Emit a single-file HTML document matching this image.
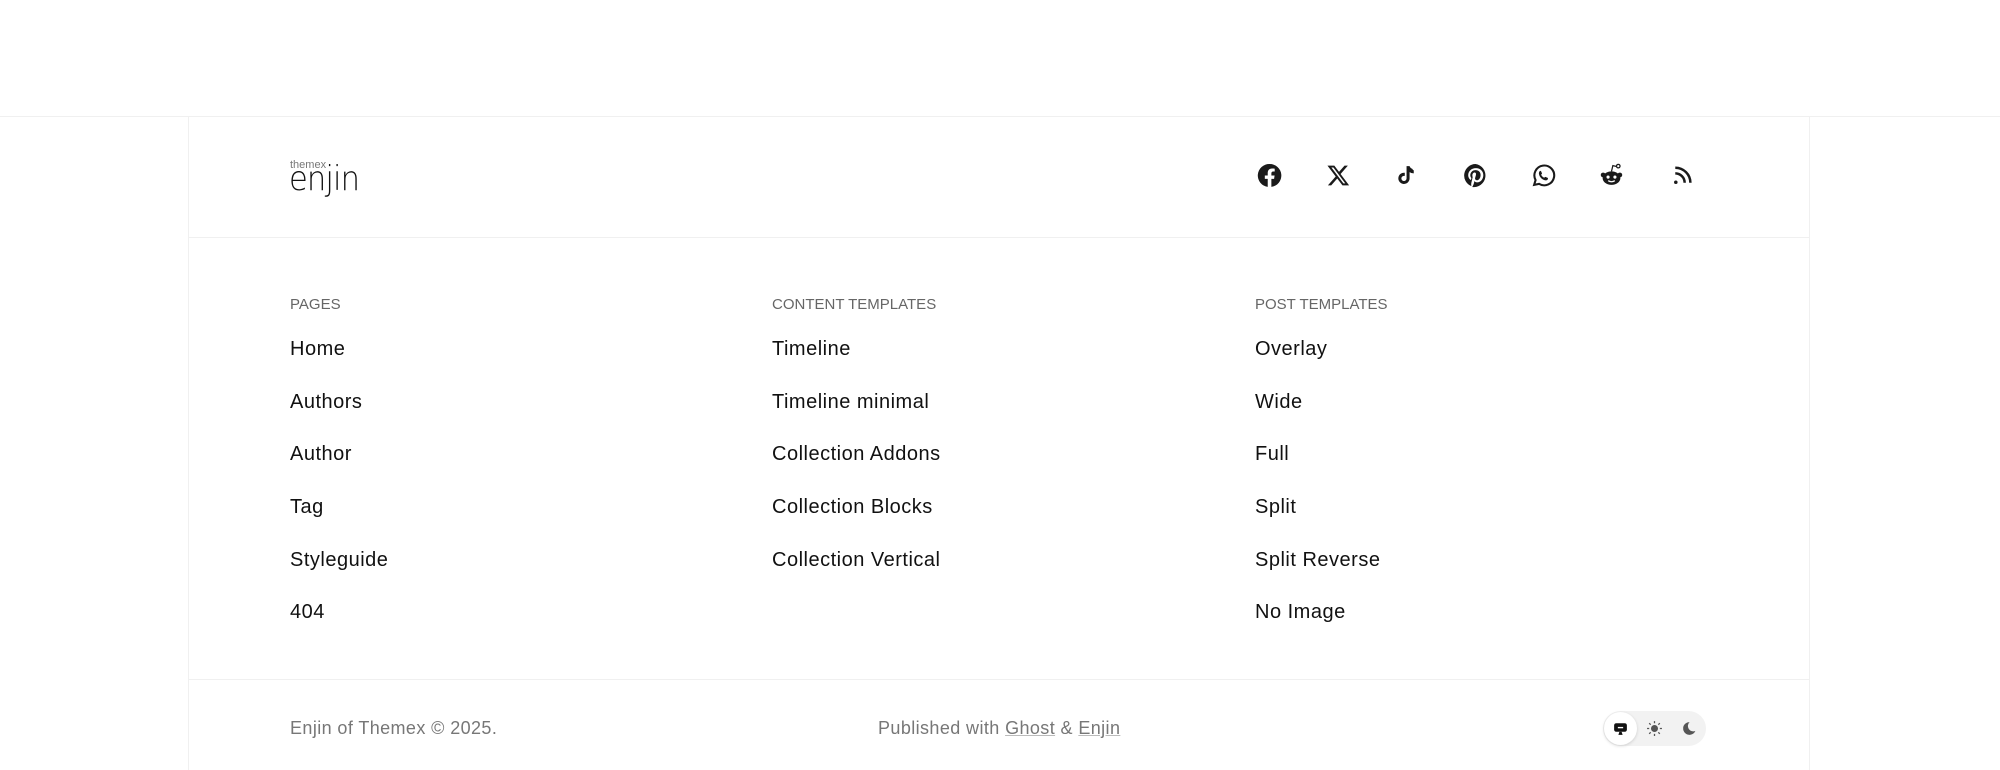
<!DOCTYPE html>
<html><head><meta charset="utf-8"><style>
*{margin:0;padding:0;box-sizing:border-box}
body{width:2000px;height:770px;overflow:hidden;background:#fff;font-family:"Liberation Sans",sans-serif;color:#111;position:relative}
.hl{position:absolute;height:1px;background:#f0f0f0}
.vl{position:absolute;width:1px;background:#f0f0f0}
.t{position:absolute;white-space:nowrap}
.h{font-size:15px;color:#666;letter-spacing:0}
.l{font-size:20px;color:#111;letter-spacing:0.5px}
.f{font-size:18px;color:#777;letter-spacing:0.4px}
.ic{position:absolute;top:163px;width:25px;height:25px}
</style></head><body>
<div class="hl" style="left:0;right:0;top:116px"></div>
<div class="vl" style="left:188px;top:116px;bottom:0"></div>
<div class="vl" style="left:1809px;top:116px;bottom:0"></div>
<div class="hl" style="left:188px;width:1621px;top:237px"></div>
<div class="hl" style="left:188px;width:1621px;top:679px"></div>

<div class="t" style="left:290px;top:159px;font-size:11px;color:#777;line-height:12px">themex</div>
<div class="t" style="left:289px;top:162px;font-size:34px;line-height:34px;font-family:'DejaVu Sans',sans-serif;font-weight:300;color:#111;letter-spacing:-1px;transform:scaleX(0.9);transform-origin:left">enjin</div>

<svg class="ic" style="left:1257px" viewBox="0 0 24 24"><path fill="#1a1a1a" d="M12 1a11 11 0 0 0-1.7 21.9v-7.7H7.5V12h2.8V9.6c0-2.8 1.6-4.3 4.2-4.3 1.2 0 2.5.2 2.5.2v2.7h-1.4c-1.4 0-1.8.9-1.8 1.8V12h3.1l-.5 3.2h-2.6v7.7A11 11 0 0 0 12 1z"/></svg>
<svg class="ic" style="left:1326px" viewBox="0 0 24 24"><path fill="#1a1a1a" d="M17.8 2.5h3.2l-7 8 8.2 11h-6.4l-5-6.6-5.8 6.6H1.8l7.5-8.6L1.4 2.5h6.6l4.5 6zm-1.1 17h1.8L7.1 4.3H5.2z"/></svg>
<svg class="ic" style="left:1395px" viewBox="0 0 24 24"><path fill="#1a1a1a" d="M16.5 5.5A4 4 0 0 1 14 3h-2.9v11.8a2.5 2.5 0 1 1-2.5-2.5c.3 0 .5 0 .8.1V9.4a5.4 5.4 0 1 0 4.6 5.4V8.7a6.8 6.8 0 0 0 4 1.3V7.1a4 4 0 0 1-1.5-1.6z"/></svg>
<svg class="ic" style="left:1463px" viewBox="0 0 24 24"><path fill="#1a1a1a" d="M12 1a11 11 0 0 0-4 21.2c-.1-.9-.2-2.2 0-3.1l1.3-5.5s-.3-.7-.3-1.7c0-1.6.9-2.8 2.1-2.8 1 0 1.4.7 1.4 1.6 0 1-.6 2.4-.9 3.8-.3 1.1.6 2.1 1.7 2.1 2 0 3.6-2.1 3.6-5.2 0-2.7-2-4.6-4.8-4.6-3.2 0-5.1 2.4-5.1 4.9 0 1 .4 2 .9 2.6.1.1.1.2.1.3l-.3 1.4c-.1.2-.2.3-.4.2-1.4-.7-2.3-2.7-2.3-4.4 0-3.6 2.6-6.9 7.5-6.9 3.9 0 7 2.8 7 6.6 0 3.9-2.5 7.1-5.9 7.1-1.2 0-2.3-.6-2.6-1.3l-.7 2.7c-.3 1-1 2.2-1.4 3A11 11 0 1 0 12 1z"/></svg>
<svg class="ic" style="left:1531px" viewBox="0 0 24 24"><path fill="none" stroke="#1a1a1a" stroke-width="2" d="M3 21l1.4-4.6A9.5 9.5 0 1 1 7.8 20z"/><path fill="#1a1a1a" d="M9 7.5c.4 0 .6.2.8.6l.7 1.7c.1.3 0 .6-.2.8l-.6.7c.6 1.2 1.6 2.2 2.9 2.9l.7-.6c.2-.2.5-.3.8-.2l1.7.7c.4.2.6.5.5.9-.2 1.2-1.2 1.8-2.2 1.7-3.3-.4-6.1-3.2-6.5-6.5-.1-1 .5-2.7 1.4-2.7z"/></svg>
<svg class="ic" style="left:1599px" viewBox="0 0 24 24"><ellipse cx="12" cy="14.5" rx="8.5" ry="6.5" fill="#1a1a1a"/><circle cx="4" cy="11.5" r="2.3" fill="#1a1a1a"/><circle cx="20" cy="11.5" r="2.3" fill="#1a1a1a"/><path d="M12 8l1.3-5.5 4.2 1" fill="none" stroke="#1a1a1a" stroke-width="1.2"/><circle cx="18.5" cy="3" r="1.7" fill="#fff" stroke="#1a1a1a" stroke-width="1.2"/><circle cx="8.7" cy="13.5" r="1.5" fill="#fff"/><circle cx="15.3" cy="13.5" r="1.5" fill="#fff"/><path d="M8.8 17c2 1.2 4.4 1.2 6.4 0" fill="none" stroke="#fff" stroke-width="1.2"/></svg>
<svg class="ic" style="left:1668px" viewBox="0 0 24 24"><path fill="none" stroke="#1a1a1a" stroke-width="2.4" d="M7 10a9 9 0 0 1 9 9M7 4.5A14.5 14.5 0 0 1 21.5 19"/><circle cx="7.5" cy="18.5" r="1.7" fill="#1a1a1a"/></svg>

<div class="t h" style="left:290px;top:296px">PAGES</div>
<div class="t h" style="left:772px;top:296px">CONTENT TEMPLATES</div>
<div class="t h" style="left:1255px;top:296px">POST TEMPLATES</div>

<div class="t l" style="left:290px;top:337px;line-height:24px">Home<br><div style="height:28.7px"></div>Authors<br><div style="height:28.7px"></div>Author<br><div style="height:28.7px"></div>Tag<br><div style="height:28.7px"></div>Styleguide<br><div style="height:28.7px"></div>404</div>
<div class="t l" style="left:772px;top:337px;line-height:24px">Timeline<br><div style="height:28.7px"></div>Timeline minimal<br><div style="height:28.7px"></div>Collection Addons<br><div style="height:28.7px"></div>Collection Blocks<br><div style="height:28.7px"></div>Collection Vertical</div>
<div class="t l" style="left:1255px;top:337px;line-height:24px">Overlay<br><div style="height:28.7px"></div>Wide<br><div style="height:28.7px"></div>Full<br><div style="height:28.7px"></div>Split<br><div style="height:28.7px"></div>Split Reverse<br><div style="height:28.7px"></div>No Image</div>

<div class="t f" style="left:290px;top:718px">Enjin of Themex © 2025.</div>
<div class="t f" style="left:878px;top:718px">Published with <span style="text-decoration:underline;text-decoration-color:#bbb">Ghost</span> &amp; <span style="text-decoration:underline;text-decoration-color:#bbb">Enjin</span></div>

<div style="position:absolute;left:1603px;top:711px;width:103px;height:35px;border-radius:18px;background:#f2f2f2"></div>
<div style="position:absolute;left:1604px;top:712px;width:33px;height:33px;border-radius:50%;background:#fff;box-shadow:0 1px 3px rgba(0,0,0,.15)"></div>
<svg style="position:absolute;left:1612px;top:720px" width="17" height="17" viewBox="0 0 16 16"><rect x="2" y="3" width="12" height="8" rx="2" fill="#111"/><rect x="5.5" y="6.5" width="5" height="1.3" fill="#fff"/><path d="M6 14h4l-1-3H7z" fill="#111"/></svg>
<svg style="position:absolute;left:1646px;top:720px" width="17" height="17" viewBox="0 0 16 16"><circle cx="8" cy="8" r="3.3" fill="#555"/><g stroke="#555" stroke-width="1.2"><path d="M8 1v2M8 13v2M1 8h2M13 8h2M3 3l1.4 1.4M11.6 11.6 13 13M3 13l1.4-1.4M11.6 4.4 13 3"/></g></svg>
<svg style="position:absolute;left:1680px;top:720px" width="17" height="17" viewBox="0 0 16 16"><path d="M9 2a6 6 0 1 0 5.5 8.2A5 5 0 0 1 9 2z" fill="#555"/></svg>
</body></html>
